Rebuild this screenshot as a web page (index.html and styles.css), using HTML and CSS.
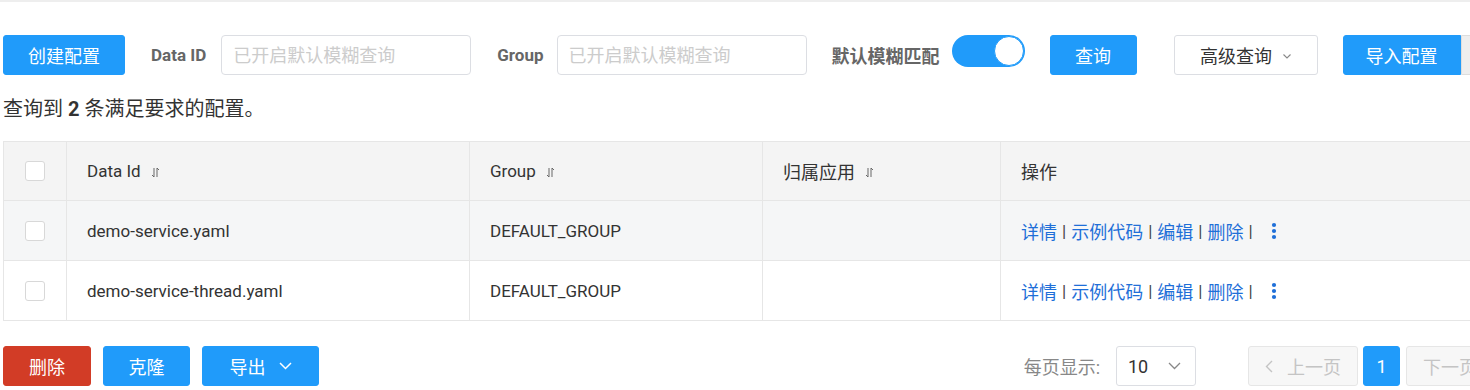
FILE: index.html
```html
<!DOCTYPE html>
<html lang="zh-CN">
<head>
<meta charset="utf-8">
<title>配置管理</title>
<link rel="stylesheet" href="styles.css">
</head>
<body>
<div class="topline"></div>
<div class="page">
  <div class="toolbar">
    <button class="btn btn-primary btn-create">创建配置</button>
    <span class="label label-dataid">Data ID</span>
    <input class="input" type="text" placeholder="已开启默认模糊查询">
    <span class="label label-group">Group</span>
    <input class="input" type="text" placeholder="已开启默认模糊查询">
    <span class="label label-fuzzy">默认模糊匹配</span>
    <div class="switch"><span class="knob"></span></div>
    <button class="btn btn-primary btn-query">查询</button>
    <button class="btn btn-normal btn-adv">高级查询
      <svg class="chev-s" width="8" height="5" viewBox="0 0 8 5"><path d="M0.5 0.5 L4 4 L7.5 0.5" fill="none" stroke="#888" stroke-width="1.1"/></svg>
    </button>
    <div class="btn-group">
      <button class="btn btn-primary btn-import">导入配置</button>
      <button class="btn btn-gray"></button>
    </div>
  </div>

  <div class="summary">查询到 <b>2</b> 条满足要求的配置。</div>

  <div class="table">
    <div class="row head">
      <div class="cell c-check"><span class="checkbox"></span></div>
      <div class="cell c-id">Data Id <svg class="sort" width="9" height="11" viewBox="0 0 9 11"><path d="M3 1 V10 L1 8" fill="none" stroke="#666" stroke-width="1"/><path d="M6 10 V1 L8 3" fill="none" stroke="#666" stroke-width="1"/></svg></div>
      <div class="cell c-group">Group <svg class="sort" width="9" height="11" viewBox="0 0 9 11"><path d="M3 1 V10 L1 8" fill="none" stroke="#666" stroke-width="1"/><path d="M6 10 V1 L8 3" fill="none" stroke="#666" stroke-width="1"/></svg></div>
      <div class="cell c-app cjk">归属应用 <svg class="sort" width="9" height="11" viewBox="0 0 9 11"><path d="M3 1 V10 L1 8" fill="none" stroke="#666" stroke-width="1"/><path d="M6 10 V1 L8 3" fill="none" stroke="#666" stroke-width="1"/></svg></div>
      <div class="cell c-op cjk">操作</div>
    </div>
    <div class="row body hover">
      <div class="cell c-check"><span class="checkbox"></span></div>
      <div class="cell c-id">demo-service.yaml</div>
      <div class="cell c-group">DEFAULT_GROUP</div>
      <div class="cell c-app"></div>
      <div class="cell c-op cjk">
        <a class="link">详情</a><span class="sep">|</span><a class="link">示例代码</a><span class="sep">|</span><a class="link">编辑</a><span class="sep">|</span><a class="link">删除</a><span class="sep">|</span>
        <svg class="kebab" width="6" height="18" viewBox="0 0 6 18"><circle cx="3" cy="3" r="2.1" fill="#1f6fd8"/><circle cx="3" cy="9" r="2.1" fill="#1f6fd8"/><circle cx="3" cy="15" r="2.1" fill="#1f6fd8"/></svg>
      </div>
    </div>
    <div class="row body">
      <div class="cell c-check"><span class="checkbox"></span></div>
      <div class="cell c-id">demo-service-thread.yaml</div>
      <div class="cell c-group">DEFAULT_GROUP</div>
      <div class="cell c-app"></div>
      <div class="cell c-op cjk">
        <a class="link">详情</a><span class="sep">|</span><a class="link">示例代码</a><span class="sep">|</span><a class="link">编辑</a><span class="sep">|</span><a class="link">删除</a><span class="sep">|</span>
        <svg class="kebab" width="6" height="18" viewBox="0 0 6 18"><circle cx="3" cy="3" r="2.1" fill="#1f6fd8"/><circle cx="3" cy="9" r="2.1" fill="#1f6fd8"/><circle cx="3" cy="15" r="2.1" fill="#1f6fd8"/></svg>
      </div>
    </div>
  </div>

  <div class="footer">
    <div class="actions">
      <button class="btn btn-danger btn-del">删除</button>
      <button class="btn btn-primary btn-clone">克隆</button>
      <button class="btn btn-primary btn-export">导出
        <svg class="chev-w" width="13" height="8" viewBox="0 0 13 8"><path d="M1 1 L6.5 6.5 L12 1" fill="none" stroke="#fff" stroke-width="1.5"/></svg>
      </button>
    </div>
    <div class="pager">
      <span class="pagesize-label">每页显示:</span>
      <div class="select">10
        <svg class="chev-g" width="13" height="8" viewBox="0 0 13 8"><path d="M1 1 L6.5 6.5 L12 1" fill="none" stroke="#888" stroke-width="1.3"/></svg>
      </div>
      <button class="btn page-btn disabled prev">
        <svg width="8" height="13" viewBox="0 0 8 13"><path d="M7 1 L1.5 6.5 L7 12" fill="none" stroke="#c4c4c4" stroke-width="1.4"/></svg>
        上一页</button>
      <button class="btn page-num">1</button>
      <button class="btn page-btn disabled next">下一页
        <svg width="8" height="13" viewBox="0 0 8 13"><path d="M1 1 L6.5 6.5 L1 12" fill="none" stroke="#c4c4c4" stroke-width="1.4"/></svg>
      </button>
    </div>
  </div>
</div>
</body>
</html>
```

FILE: styles.css
```css
html, body {
  margin: 0;
  padding: 0;
  background: #fff;
  overflow: hidden;
}
body {
  font-family: Roboto, "Noto Sans CJK SC", "Noto Sans", sans-serif;
  color: #333;
  font-size: 17px;
}
.topline {
  height: 2px;
  background: #eeeeee;
  width: 1470px;
}
.page {
  padding-left: 3px;
  width: 1513px;
}

/* buttons */
.btn {
  font-family: Roboto, "Noto Sans CJK SC", sans-serif;
  font-size: 18px;
  height: 40px;
  border-radius: 3px;
  border: 1px solid transparent;
  padding: 0;
  display: inline-flex;
  align-items: center;
  justify-content: center;
  box-sizing: border-box;
  cursor: pointer;
  flex-shrink: 0;
}
.btn-primary {
  background: #209bfa;
  color: #fff;
  border-color: #209bfa;
}
.btn-danger {
  background: #d23c26;
  border-color: #d23c26;
  color: #fff;
}
.btn-normal {
  background: #fff;
  border-color: #dcdee3;
  color: #333;
}

/* toolbar */
.toolbar {
  margin-top: 33px;
  display: flex;
  align-items: center;
  height: 40px;
}
.btn-create { width: 122px; }
.label {
  font-weight: bold;
  color: #666;
  font-size: 17px;
  flex-shrink: 0;
}
.label-dataid { margin-left: 26px; margin-right: 15px; }
.label-group { margin-left: 26px; margin-right: 13px; }
.label-fuzzy { margin-left: 25px; margin-right: 12px; font-size: 18px; }
.input {
  width: 250px;
  height: 40px;
  box-sizing: border-box;
  border: 1px solid #dcdee3;
  border-radius: 4px;
  padding: 0 11px;
  font-size: 18px;
  font-family: Roboto, "Noto Sans CJK SC", sans-serif;
  flex-shrink: 0;
  outline: none;
}
.input::placeholder { color: #cccccc; }
.switch {
  align-self: flex-start;
  width: 73px;
  height: 32px;
  border-radius: 16px;
  background: #209bfa;
  box-sizing: border-box;
  padding: 1px;
  display: flex;
  justify-content: flex-end;
  align-items: center;
  flex-shrink: 0;
}
.knob {
  width: 30px;
  height: 30px;
  border-radius: 50%;
  background: #fff;
  box-sizing: border-box;
  border: 1px solid #209bfa;
}
.btn-query { width: 87px; margin-left: 25px; }
.btn-adv { width: 144px; margin-left: 37px; gap: 11px; }
.chev-s { margin-top: 2px; }
.btn-group { display: flex; margin-left: 25px; }
.btn-import { width: 118px; border-radius: 3px 0 0 3px; }
.btn-gray {
  width: 40px;
  background: #eeeeee;
  border-color: #dddddd;
  border-radius: 0 3px 3px 0;
}

/* summary */
.summary {
  margin-top: 21px;
  font-size: 20px;
  line-height: 26px;
  color: #333;
}
.summary b { font-weight: bold; }

/* table */
.table {
  margin-top: 19px;
  border-top: 1px solid #e6e6e6;
  border-left: 1px solid #e6e6e6;
}
.row {
  display: grid;
  grid-template-columns: 62px 403px 293px 238px 1fr;
  border-bottom: 1px solid #e6e6e6;
}
.row.head { height: 58px; background: #f4f4f4; }
.row.body { height: 59px; background: #fff; }
.row.body.hover { background: #f5f6f7; }
.cell {
  display: flex;
  align-items: center;
  padding-left: 20px;
  font-size: 17px;
  color: #333;
  white-space: nowrap;
}
.cell.cjk { font-size: 18px; }
.cell + .cell { border-left: 1px solid #e6e6e6; }
.c-check { padding-left: 0; justify-content: center; }
.checkbox {
  width: 18px;
  height: 18px;
  border: 1px solid #d8d8d8;
  border-radius: 3px;
  background: #fff;
}
.sort { margin-left: 10px; margin-top: 2px; }
.link { color: #1f6fd8; text-decoration: none; cursor: pointer; }
.sep { margin: 0 5px; color: #444; font-size: 17px; }
.kebab { margin-left: 13px; }

/* footer */
.footer {
  margin-top: 25px;
  display: flex;
  align-items: center;
}
.actions { display: flex; gap: 12px; }
.btn-del { width: 88px; }
.btn-clone { width: 87px; }
.btn-export { width: 117px; gap: 13px; }
.pager {
  margin-left: auto;
  display: flex;
  align-items: center;
}
.pagesize-label { color: #888; font-size: 18px; margin-right: 16px; }
.select {
  width: 80px;
  height: 40px;
  box-sizing: border-box;
  border: 1px solid #dcdee3;
  border-radius: 3px;
  display: flex;
  align-items: center;
  padding-left: 11px;
  gap: 20px;
  font-size: 18px;
  color: #333;
}
.page-btn {
  width: 110px;
  background: #f7f7f7;
  border-color: #e6e6e6;
  color: #c4c4c4;
  gap: 14px;
}
.prev { margin-left: 52px; }
.page-num {
  width: 37px;
  margin-left: 5px;
  margin-right: 6px;
  background: #209bfa;
  border-color: #209bfa;
  color: #fff;
}
```
